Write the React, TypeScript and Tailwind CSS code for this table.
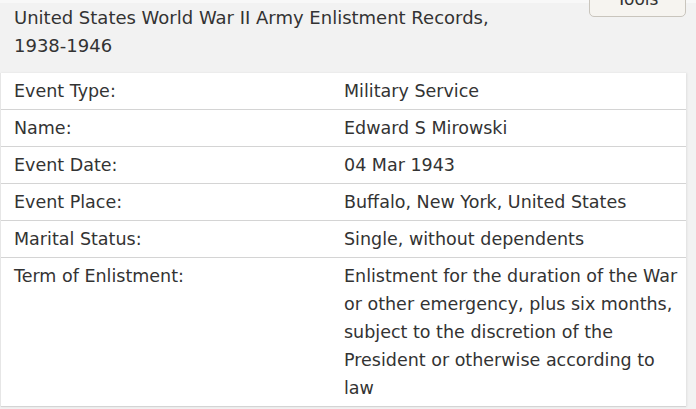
import React from 'react';

const rows: { label: string; value: string }[] = [
  { label: 'Event Type:', value: 'Military Service' },
  { label: 'Name:', value: 'Edward S Mirowski' },
  { label: 'Event Date:', value: '04 Mar 1943' },
  { label: 'Event Place:', value: 'Buffalo, New York, United States' },
  { label: 'Marital Status:', value: 'Single, without dependents' },
  {
    label: 'Term of Enlistment:',
    value:
      'Enlistment for the duration of the War or other emergency, plus six months, subject to the discretion of the President or otherwise according to law',
  },
];

export default function App() {
  return (
    <div className="w-[696px] h-[409px] overflow-hidden bg-[#f2f2f2] text-[#333] font-['DejaVu_Sans',Verdana,sans-serif] text-[17.5px] leading-[28px]">
      <div className="flex items-start h-[73px] border-t-[3px] border-[#f8f8f8]">
        <h1 className="pl-[14px] pt-[1px] w-[500px] font-normal text-[18px]">
          United States World War II Army Enlistment Records, 1938-1946
        </h1>
        <button className="ml-auto mr-[10px] -mt-[22px] w-[97px] h-[36px] rounded-[5px] border border-[#c9c5bd] bg-[#f6f4f0] text-[#333] text-[17px] leading-[30px]">
          Tools
        </button>
      </div>
      <div className="w-[686px] bg-white border-l border-[#e6e6e6] shadow-[1px_0_2px_rgba(0,0,0,0.08)]">
        {rows.map((r) => (
          <div key={r.label} className="flex border-b border-[#d4d4d4] py-[4px]">
            <div className="w-[343px] pl-[13px] shrink-0">{r.label}</div>
            <div className="w-[342px]">{r.value}</div>
          </div>
        ))}
      </div>
    </div>
  );
}
